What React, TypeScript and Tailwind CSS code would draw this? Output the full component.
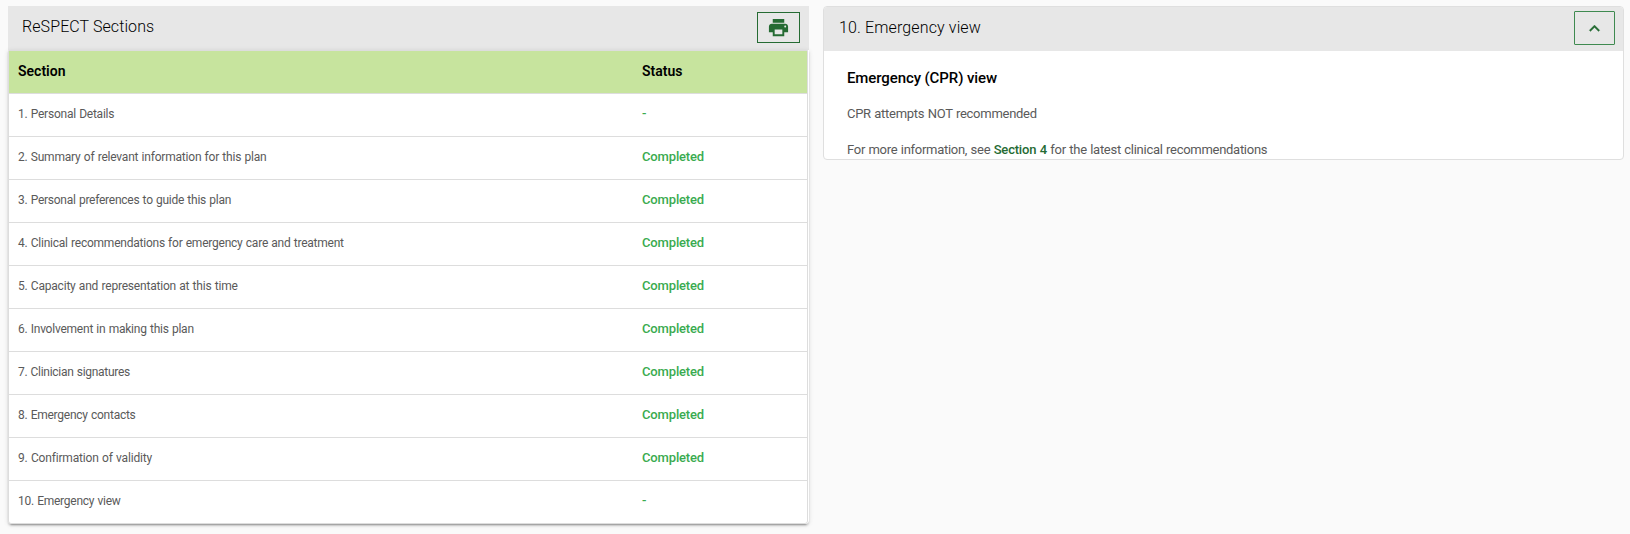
const sections = [
  { name: '1. Personal Details', status: '-', tracking: 'tracking-[-0.23px]' },
  { name: '2. Summary of relevant information for this plan', status: 'Completed', tracking: 'tracking-[-0.205px]' },
  { name: '3. Personal preferences to guide this plan', status: 'Completed', tracking: 'tracking-[-0.25px]' },
  { name: '4. Clinical recommendations for emergency care and treatment', status: 'Completed', tracking: 'tracking-[-0.23px]' },
  { name: '5. Capacity and representation at this time', status: 'Completed', tracking: 'tracking-[-0.2px]' },
  { name: '6. Involvement in making this plan', status: 'Completed', tracking: 'tracking-[-0.23px]' },
  { name: '7. Clinician signatures', status: 'Completed', tracking: 'tracking-[-0.28px]' },
  { name: '8. Emergency contacts', status: 'Completed', tracking: 'tracking-[-0.25px]' },
  { name: '9. Confirmation of validity', status: 'Completed', tracking: 'tracking-[-0.165px]' },
  { name: '10. Emergency view', status: '-', tracking: 'tracking-[-0.25px]' },
];

function PrintIcon() {
  return (
    <svg viewBox="0 0 24 24" className="size-[23px] fill-[#256b33]">
      <path d="M19 8H5c-1.66 0-3 1.34-3 3v6h4v4h12v-4h4v-6c0-1.66-1.34-3-3-3zm-3 11H8v-5h8v5zm3-7c-.55 0-1-.45-1-1s.45-1 1-1 1 .45 1 1-.45 1-1 1zm-1-9H6v4h12V3z" />
    </svg>
  );
}

function SectionsPanel() {
  return (
    <section className="w-[801px]">
      <header className="flex h-[44px] items-center justify-between bg-[#e7e7e7] pr-[9px] pl-[14px]">
        <h1 className="mt-[-3px] text-[16px] leading-6 font-light tracking-[0.09px] text-black">ReSPECT Sections</h1>
        <button aria-label="Print" className="mt-[-1px] flex h-[31px] w-[43px] items-center justify-center border border-[#256b33] pr-px">
          <PrintIcon />
        </button>
      </header>
      <div className="relative rounded-b-[4px] bg-white shadow-[0_3px_1px_-2px_rgba(0,0,0,0.2),0_2px_2px_0_rgba(0,0,0,0.14),0_1px_5px_0_rgba(0,0,0,0.12)]">
        <table className="w-[800px] table-fixed border-separate border-spacing-0 rounded-b-[3px] border border-[#dddddd] text-left">
          <thead>
            <tr className="h-[43px] bg-[#c7e49e] text-[14px] text-black">
              <th className="w-[624px] border-b border-[#dddddd] pt-0 pb-px pl-[9px] font-semibold">Section</th>
              <th className="border-b border-[#dddddd] pt-0 pb-px pl-[9px] font-semibold">Status</th>
            </tr>
          </thead>
          <tbody>
            {sections.map((s, i) => (
              <tr key={s.name} className={i === sections.length - 1 ? 'h-[42px]' : 'h-[43px] [&>td]:border-b [&>td]:border-[#dddddd]'}>
                <td className={`pb-[2px] pl-[9px] text-[12px] font-normal text-[#5a5a5a] [word-spacing:0.5px] ${s.tracking}`}>{s.name}</td>
                <td className="pb-[2px] pl-[9px] text-[13px] font-medium tracking-[-0.15px] text-[#3aab4f]">{s.status}</td>
              </tr>
            ))}
          </tbody>
        </table>
      </div>
    </section>
  );
}

function EmergencyPanel() {
  return (
    <section className="h-[154px] w-[801px] overflow-hidden rounded-[4px] border border-[#dfdfdf] bg-white">
      <header className="-mt-px flex h-[45px] items-center justify-between bg-[#e7e7e7] pr-[8px] pl-[15px]">
        <h2 className="mt-[-2px] text-[16px] leading-6 font-light tracking-[0.13px] text-black">10. Emergency view</h2>
        <button aria-label="Collapse" className="mt-[-1px] flex h-[34px] w-[41px] items-center justify-center rounded-[1px] border border-[#3f8a50]">
          <svg viewBox="0 0 24 24" className="size-[21px] fill-[#256b33] stroke-[#256b33] stroke-[0.3]">
            <path d="m12 8-6 6 1.41 1.41L12 10.83l4.59 4.58L18 14z" />
          </svg>
        </button>
      </header>
      <div className="flex flex-col gap-[16px] pt-[17px] pl-[23px] text-[13px] text-[#5a5a5a]">
        <h3 className="text-[15px] leading-5 font-medium tracking-[-0.1px] text-black">Emergency (CPR) view</h3>
        <p className="leading-5 tracking-[-0.27px] [word-spacing:0.5px]">CPR attempts NOT recommended</p>
        <p className="leading-5 tracking-[-0.28px] [word-spacing:0.5px]">
          For more information, see <a className="font-medium tracking-[-0.2px] text-[#256b33]">Section 4</a> for the latest clinical recommendations
        </p>
      </div>
    </section>
  );
}

export default function App() {
  return (
    <main className="flex h-[534px] items-start gap-[14px] bg-[#fafafa] pt-[6px] pl-[8px] font-['Roboto',sans-serif]">
      <SectionsPanel />
      <EmergencyPanel />
    </main>
  );
}
